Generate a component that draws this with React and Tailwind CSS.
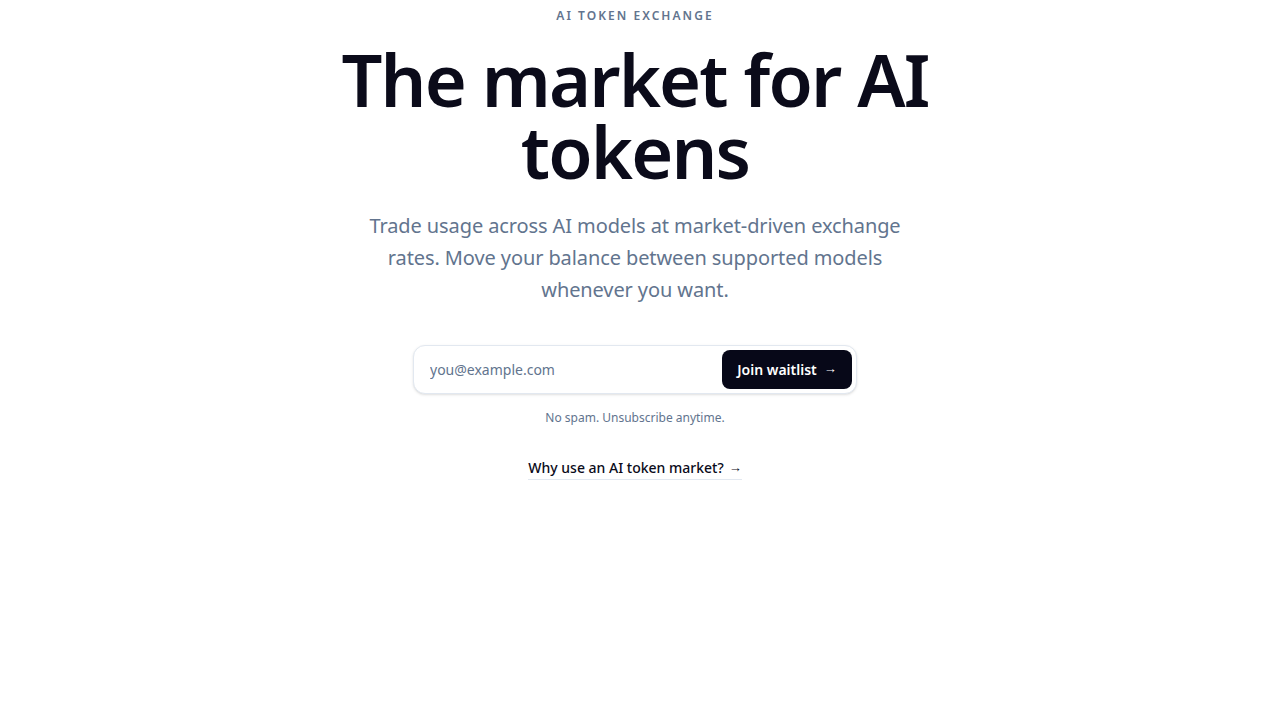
export default function App() {
  return (
    <div
      className="min-h-[714px] bg-white flex flex-col items-center pt-[8px]"
      style={{ fontFamily: '"Noto Sans", sans-serif' }}
    >
      <p className="text-xs leading-4 font-semibold tracking-[0.17em] text-slate-500 uppercase">
        AI Token Exchange
      </p>
      <h1 className="mt-[19px] max-w-[640px] text-center text-[72px] leading-[72px] font-semibold tracking-[-0.026em] text-[#0b0b1a]">
        The market for AI tokens
      </h1>
      <p className="mt-[23px] max-w-[560px] text-center text-xl leading-8 tracking-[-0.005em] text-slate-500">
        Trade usage across AI models at market-driven exchange rates. Move your balance between supported models whenever you want.
      </p>
      <form
        className="mt-[39px] w-[444px] h-[49px] flex items-center rounded-xl border border-slate-200 bg-white shadow-sm pl-4 pr-[4px]"
        onSubmit={(e) => e.preventDefault()}
      >
        <input
          type="email"
          placeholder="you@example.com"
          className="flex-1 min-w-0 bg-transparent text-sm text-slate-700 placeholder:text-slate-500 outline-none"
          style={{ fontFamily: '"Noto Sans", sans-serif' }}
        />
        <button
          type="submit"
          className="h-[39px] w-[130px] rounded-lg bg-[#070818] text-white text-sm font-semibold flex items-center justify-center gap-[7px]"
          style={{ fontFamily: '"Noto Sans", sans-serif' }}
        >
          <span>Join waitlist</span>
          <span className="font-normal text-[13px]" style={{ fontFamily: '"Liberation Sans", sans-serif' }}>→</span>
        </button>
      </form>
      <p className="mt-4 text-xs leading-4 text-slate-500">No spam. Unsubscribe anytime.</p>
      <a
        href="#"
        className="mt-8 inline-flex items-center gap-[5px] text-sm leading-5 font-medium text-[#0b0b1a] border-b border-slate-200 pb-[1px]"
      >
        <span>Why use an AI token market?</span>
        <span className="font-normal text-[13px] leading-5" style={{ fontFamily: '"Liberation Sans", sans-serif' }}>→</span>
      </a>
    </div>
  );
}
